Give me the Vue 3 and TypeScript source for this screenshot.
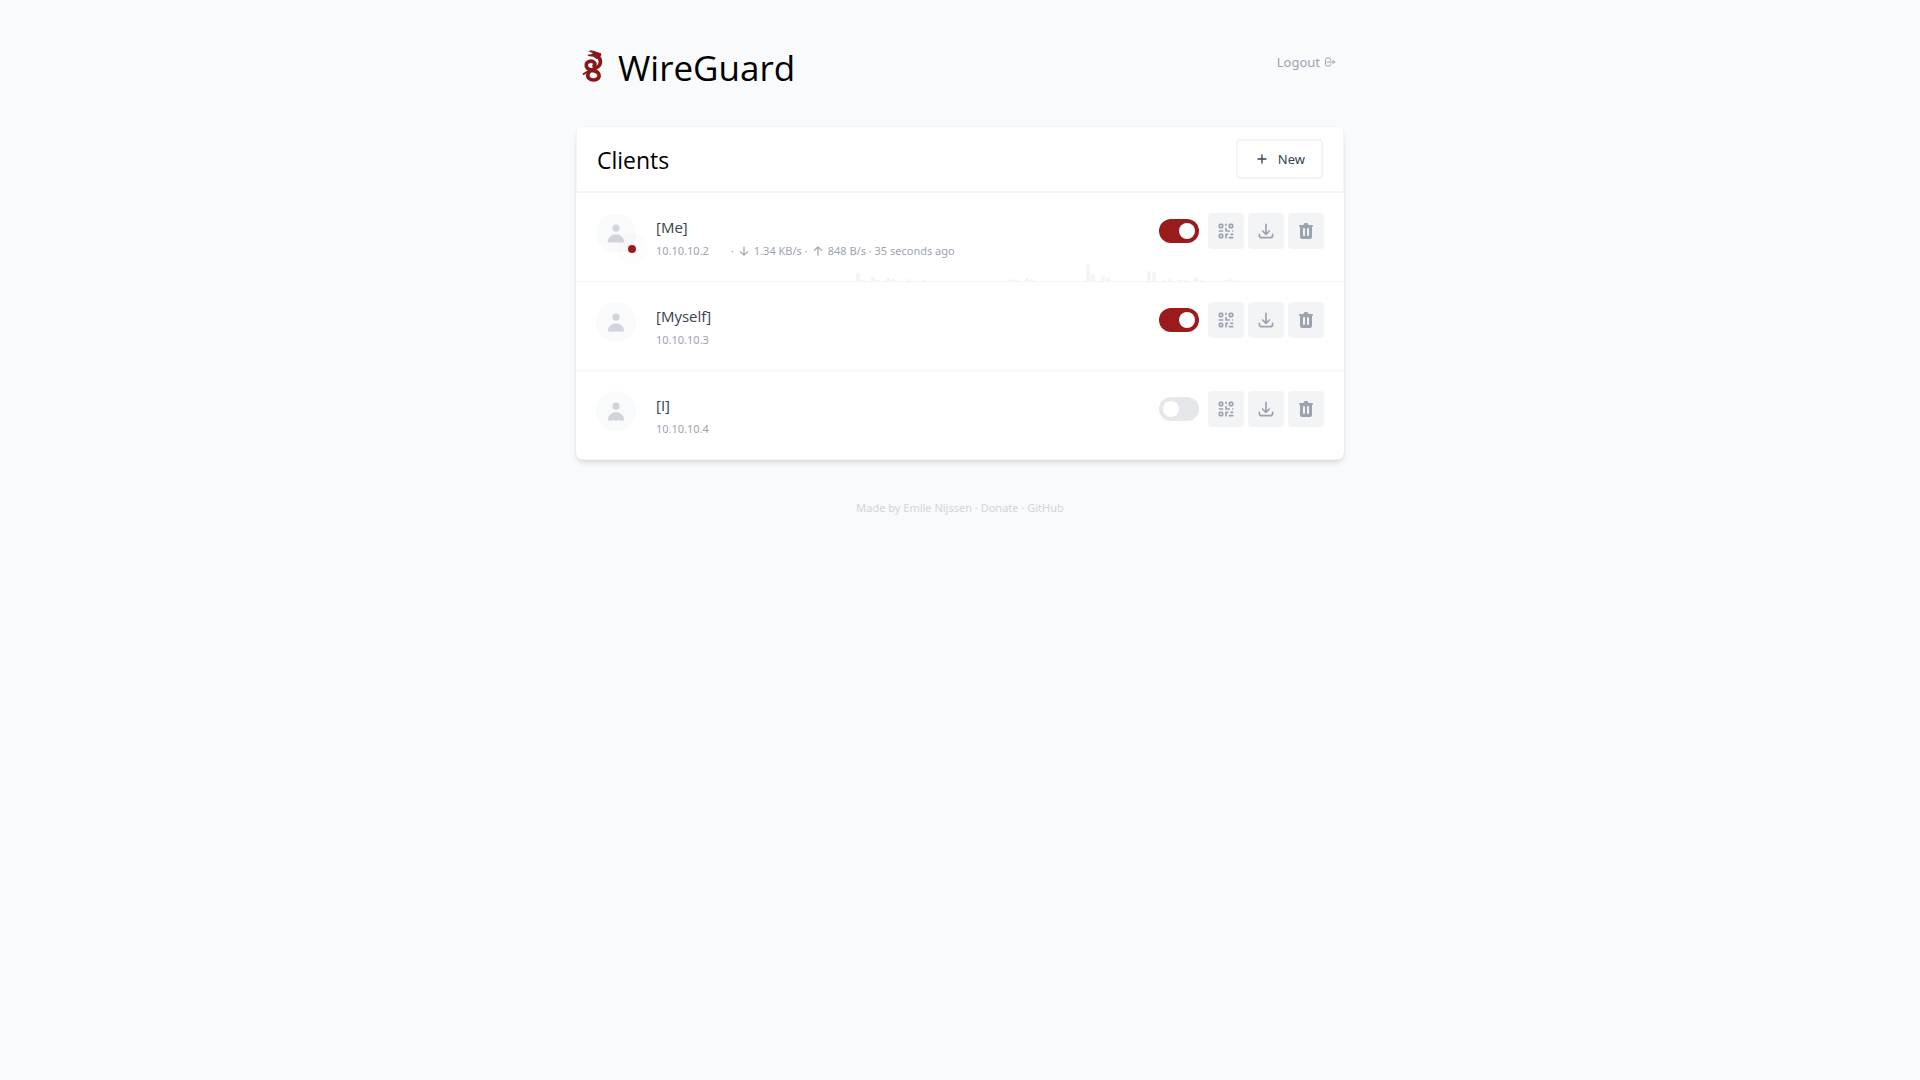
<script setup lang="ts">
import { ref } from 'vue'

interface Transfer {
  down: string
  up: string
  seen: string
}

interface Client {
  id: string
  name: string
  address: string
  enabled: boolean
  transfer?: Transfer
  history: Record<number, [number, number]>
}

const clients = ref<Client[]>([
  {
    id: 'me',
    name: '[Me]',
    address: '10.10.10.2',
    enabled: true,
    transfer: { down: '1.34 KB/s', up: '848 B/s', seen: '35 seconds ago' },
    history: {
      18: [8, 1],
      19: [4, 1],
      20: [3, 2],
      21: [0, 2],
      22: [0, 1],
      28: [2, 1],
      29: [3, 2],
      33: [17, 7],
      34: [5, 3],
      37: [10, 9],
      38: [1, 2],
      39: [1, 1],
      40: [4, 1],
      42: [1, 2],
    },
  },
  { id: 'myself', name: '[Myself]', address: '10.10.10.3', enabled: true, history: {} },
  { id: 'i', name: '[I]', address: '10.10.10.4', enabled: false, history: {} },
])

const slots = Array.from({ length: 50 }, (_, i) => i)

function bars(client: Client, slot: number): [number, number] {
  return client.history[slot] ?? [0, 0]
}
</script>

<template>
  <main class="page">
    <header class="top">
      <h1 class="brand">
        <svg class="logo" viewBox="0 0 96 96" aria-hidden="true">
          <g fill="none" stroke="#88171a" stroke-linecap="round">
            <path stroke-width="11" d="M50 61C36 59 29 52 31 43C33 34 45 31 53 36C58 39 58 44 54 47" />
            <path stroke-width="11" d="M64 18C76 26 76 42 66 50C58 57 40 59 36 72C33 84 42 90 53 90C66 90 71 81 69 74C67 66 60 63 50 61" />
            <path stroke-width="6" d="M35 65L23 72" />
          </g>
          <path fill="#88171a" d="M36 3L45 4L40 0L55 3L63 6L75 10L76 17L67 19L70 25L62 27L52 20L37 18L34 14L46 13L51 9L43 7Z" />
        </svg>
        <span>WireGuard</span>
      </h1>
      <a class="logout" href="#logout">
        Logout
        <svg class="icon-xs" viewBox="0 0 24 24" fill="none" stroke="currentColor" stroke-width="2" stroke-linecap="round" stroke-linejoin="round" aria-hidden="true">
          <path d="M17 16l4-4m0 0l-4-4m4 4H7m6 4v1a3 3 0 01-3 3H6a3 3 0 01-3-3V7a3 3 0 013-3h4a3 3 0 013 3v1" />
        </svg>
      </a>
    </header>

    <section class="card">
      <div class="card-head">
        <h2>Clients</h2>
        <button class="new" type="button">
          <svg class="icon-sm" viewBox="0 0 24 24" fill="none" stroke="currentColor" stroke-width="2" stroke-linecap="round" aria-hidden="true">
            <path d="M12 6v12M6 12h12" />
          </svg>
          New
        </button>
      </div>

      <div v-for="client in clients" :key="client.id" class="client">
        <div v-if="client.transfer" class="chart" aria-hidden="true">
          <div v-for="slot in slots" :key="slot" class="slot">
            <i v-for="(height, n) in bars(client, slot)" :key="n" class="bar" :style="{ height: height + 'px' }"></i>
          </div>
        </div>

        <div class="avatar">
          <svg class="icon-lg" viewBox="0 0 20 20" fill="currentColor" aria-hidden="true">
            <path d="M10 9a3 3 0 100-6 3 3 0 000 6zm-7 9a7 7 0 1114 0H3z" />
          </svg>
          <span v-if="client.transfer" class="online"></span>
        </div>

        <div class="info">
          <div class="name">{{ client.name }}</div>
          <div class="meta">
            <span class="address">{{ client.address }}</span>
            <span v-if="client.transfer" class="transfer">
              ·
              <svg class="icon-xs" viewBox="0 0 20 20" fill="currentColor" aria-hidden="true">
                <path d="M16.707 10.293a1 1 0 010 1.414l-6 6a1 1 0 01-1.414 0l-6-6a1 1 0 111.414-1.414L9 14.586V3a1 1 0 012 0v11.586l4.293-4.293a1 1 0 011.414 0z" />
              </svg>
              {{ client.transfer.down }} ·
              <svg class="icon-xs" viewBox="0 0 20 20" fill="currentColor" aria-hidden="true">
                <path d="M3.293 9.707a1 1 0 010-1.414l6-6a1 1 0 011.414 0l6 6a1 1 0 01-1.414 1.414L11 5.414V17a1 1 0 11-2 0V5.414L4.707 9.707a1 1 0 01-1.414 0z" />
              </svg>
              {{ client.transfer.up }} · {{ client.transfer.seen }}
            </span>
          </div>
        </div>

        <div class="actions">
          <input v-model="client.enabled" class="toggle" type="checkbox" :aria-label="'Enable ' + client.name" />
          <button class="action" type="button" aria-label="Show QR Code">
            <svg class="icon-md" viewBox="0 0 24 24" fill="none" stroke="currentColor" stroke-width="2" stroke-linecap="round" stroke-linejoin="round" aria-hidden="true">
              <path d="M12 4v1m6 11h2m-6 0h-2v4m0-11v3m0 0h.01M12 12h4.01M16 20h4M4 12h4m12 0h.01M5 8h2a1 1 0 001-1V5a1 1 0 00-1-1H5a1 1 0 00-1 1v2a1 1 0 001 1zm12 0h2a1 1 0 001-1V5a1 1 0 00-1-1h-2a1 1 0 00-1 1v2a1 1 0 001 1zM5 20h2a1 1 0 001-1v-2a1 1 0 00-1-1H5a1 1 0 00-1 1v2a1 1 0 001 1z" />
            </svg>
          </button>
          <button class="action" type="button" aria-label="Download Configuration">
            <svg class="icon-md" viewBox="0 0 24 24" fill="none" stroke="currentColor" stroke-width="2" stroke-linecap="round" stroke-linejoin="round" aria-hidden="true">
              <path d="M4 16v1a3 3 0 003 3h10a3 3 0 003-3v-1m-4-4l-4 4m0 0l-4-4m4 4V4" />
            </svg>
          </button>
          <button class="action" type="button" aria-label="Delete Client">
            <svg class="icon-md" viewBox="0 0 20 20" fill="currentColor" aria-hidden="true">
              <path fill-rule="evenodd" d="M9 2a1 1 0 00-.894.553L7.382 4H4a1 1 0 000 2v10a2 2 0 002 2h8a2 2 0 002-2V6a1 1 0 100-2h-3.382l-.724-1.447A1 1 0 0011 2H9zM7 8a1 1 0 012 0v6a1 1 0 11-2 0V8zm5-1a1 1 0 00-1 1v6a1 1 0 102 0V8a1 1 0 00-1-1z" clip-rule="evenodd" />
            </svg>
          </button>
        </div>
      </div>
    </section>

    <footer class="footer">
      Made by <a href="#author">Emile Nijssen</a> · <a href="#donate">Donate</a> · <a href="#github">GitHub</a>
    </footer>
  </main>
</template>

<style>
body {
  background: #f9fafb;
}
</style>

<style scoped>
* {
  box-sizing: border-box;
}

.page {
  max-width: 768px;
  margin: 0 auto;
  padding-top: 46px;
  font-family: 'Segoe UI', 'Noto Sans', 'Open Sans', sans-serif;
  font-size: 15px;
  line-height: 24px;
  color: #000;
}

h1,
h2,
.name {
  margin: 0;
  font-family: 'Segoe UI', 'Open Sans', sans-serif;
  font-weight: 400;
}

a {
  color: inherit;
  text-decoration: none;
}

button {
  font-family: inherit;
  cursor: pointer;
}

.icon-xs,
.icon-sm,
.icon-md,
.icon-lg {
  flex: none;
}

.icon-xs {
  width: 12px;
  height: 12px;
}

.icon-sm {
  width: 16px;
  height: 16px;
}

.icon-md {
  width: 20px;
  height: 20px;
}

.icon-lg {
  width: 24px;
  height: 24px;
}

.top {
  display: flex;
  justify-content: space-between;
  margin-bottom: 36px;
}

.brand {
  display: flex;
  align-items: center;
  gap: 10px;
  font-size: 35px;
  line-height: 44px;
}

.logo {
  width: 32px;
  height: 32px;
  margin-bottom: 4px;
}

.logout {
  display: flex;
  align-items: center;
  gap: 4px;
  height: 32px;
  padding-right: 8px;
  font-size: 13px;
  color: #9ca3af;
}

.card {
  overflow: hidden;
  border-radius: 8px;
  background: #fff;
  box-shadow: 0 4px 6px -1px rgba(0, 0, 0, 0.1), 0 2px 4px -1px rgba(0, 0, 0, 0.06);
}

.card-head {
  display: flex;
  align-items: center;
  justify-content: space-between;
  padding: 12px 20px;
  border: 1px solid #f3f4f6;
  border-bottom-width: 2px;
}

.card-head h2 {
  padding-top: 2px;
  font-size: 23px;
  line-height: 32px;
}

.new {
  display: flex;
  align-items: center;
  gap: 8px;
  height: 40px;
  padding: 0 16px;
  border: 2px solid #f3f4f6;
  border-radius: 4px;
  background: none;
  font-size: 13px;
  color: #374151;
}

.client {
  position: relative;
  display: flex;
  padding: 20px 20px 18px;
  border-bottom: 1px solid #f3f4f6;
}

.chart {
  position: absolute;
  inset: auto 0 0;
  display: flex;
  align-items: flex-end;
}

.slot {
  display: flex;
  flex: 1;
  align-items: flex-end;
  justify-content: center;
  gap: 1px;
}

.bar {
  width: 4px;
  border-radius: 2px 2px 0 0;
  background: #f3f4f6;
}

.avatar {
  position: relative;
  width: 40px;
  height: 40px;
  margin-right: 20px;
  padding: 8px;
  border-radius: 50%;
  background: #f9fafb;
  color: #d1d5db;
}

.online {
  position: absolute;
  right: 0;
  bottom: 0;
  width: 8px;
  height: 8px;
  border-radius: 50%;
  background: #991b1b;
  box-shadow: 0 0 0 11px rgba(153, 27, 27, 0.01);
}

.info {
  position: relative;
  flex: 1;
  padding-top: 2px;
}

.name {
  line-height: 24px;
  color: #374151;
}

.meta {
  display: flex;
  gap: 22px;
  font-size: 11px;
  line-height: 24px;
  color: #9ca3af;
}

.transfer {
  display: flex;
  align-items: center;
  gap: 4px;
}

.actions {
  position: relative;
  display: flex;
  align-items: center;
  align-self: flex-start;
  gap: 4px;
}

.toggle {
  appearance: none;
  width: 40px;
  height: 24px;
  margin: 0 5px 0 0;
  padding: 4px;
  border-radius: 12px;
  background: #e5e7eb;
  cursor: pointer;
}

.toggle::before {
  content: '';
  display: block;
  width: 16px;
  height: 16px;
  border-radius: 50%;
  background: #fff;
}

.toggle:checked {
  background: #991b1b;
}

.toggle:checked::before {
  margin-left: 16px;
}

.action {
  display: flex;
  padding: 8px;
  border: 0;
  border-radius: 4px;
  background: #f3f4f6;
  color: #9ca3af;
}

.footer {
  margin: 36px 0;
  text-align: center;
  font-size: 11px;
  color: #d1d5db;
}
</style>
